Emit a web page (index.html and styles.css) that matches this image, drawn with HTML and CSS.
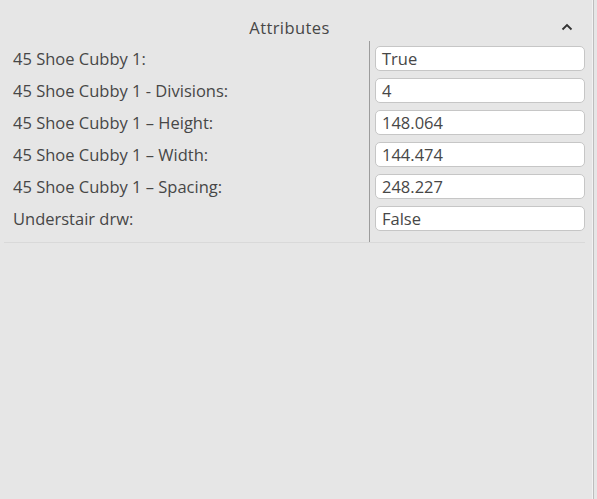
FILE: index.html
```html
<!DOCTYPE html>
<html>
  <head>
    <title>Attributes</title>
    <meta name="viewport" content="width=device-width,initial-scale=1">
    <link rel="stylesheet" href="styles.css">
  </head>
  <body>
    <div class="window">
      <div class="panel">
        <div class="panel-header">
          <span class="panel-title">Attributes</span>
          <svg class="collapse-icon" width="12" height="8" viewBox="0 0 12 8">
            <path d="M1.5 6.5 L6 2 L10.5 6.5" fill="none" stroke="#333" stroke-width="1.8"/>
          </svg>
        </div>
        <div class="attr-table">
          <div class="attr-labels">
            <div class="attr-label">45 Shoe Cubby 1:</div>
            <div class="attr-label">45 Shoe Cubby 1 - Divisions:</div>
            <div class="attr-label">45 Shoe Cubby 1 – Height:</div>
            <div class="attr-label">45 Shoe Cubby 1 – Width:</div>
            <div class="attr-label">45 Shoe Cubby 1 – Spacing:</div>
            <div class="attr-label">Understair drw:</div>
          </div>
          <div class="attr-values">
            <div class="attr-value">True</div>
            <div class="attr-value">4</div>
            <div class="attr-value">148.064</div>
            <div class="attr-value">144.474</div>
            <div class="attr-value">248.227</div>
            <div class="attr-value">False</div>
          </div>
        </div>
      </div>
      <div class="edge"></div>
    </div>
  </body>
</html>
```

FILE: styles.css
```css
body {
  margin: 0;
  background: #e6e6e6;
  font-family: "Open Sans", "Liberation Sans", sans-serif;
  font-size: 16.5px;
  color: #474747;
}

.window {
  display: flex;
  height: 499px;
}

.panel {
  flex: 1;
  padding: 0 7px 0 4px;
}

.panel-header {
  position: relative;
  display: flex;
  justify-content: center;
  align-items: center;
  height: 41px;
  padding-top: 15px;
  box-sizing: border-box;
  padding-right: 10px;
}

.panel-title {
  line-height: 26px;
  letter-spacing: 0.4px;
}

.collapse-icon {
  position: absolute;
  right: 12px;
  top: 23px;
}

.attr-table {
  display: flex;
  border-bottom: 1px solid #d9d9d9;
}

.attr-labels {
  width: 366px;
  padding: 5px 0 11px 9px;
  box-sizing: border-box;
  border-right: 1px solid #9c9c9c;
}

.attr-label {
  height: 25px;
  line-height: 25px;
  margin-bottom: 7px;
}

.attr-label:last-child,
.attr-value:last-child {
  margin-bottom: 0;
}

.attr-values {
  flex: 1;
  padding: 5px 0 11px 5px;
}

.attr-value {
  height: 25px;
  line-height: 23px;
  margin-bottom: 7px;
  padding: 0 6px;
  box-sizing: border-box;
  background: #ffffff;
  border: 1px solid #c6c6c6;
  border-radius: 5px;
}

.edge {
  width: 5px;
  box-sizing: border-box;
  border-left: 1px solid #f2f2f2;
  border-right: 3px solid #e6e6e6;
  background: #bdbdbd;
}
```
